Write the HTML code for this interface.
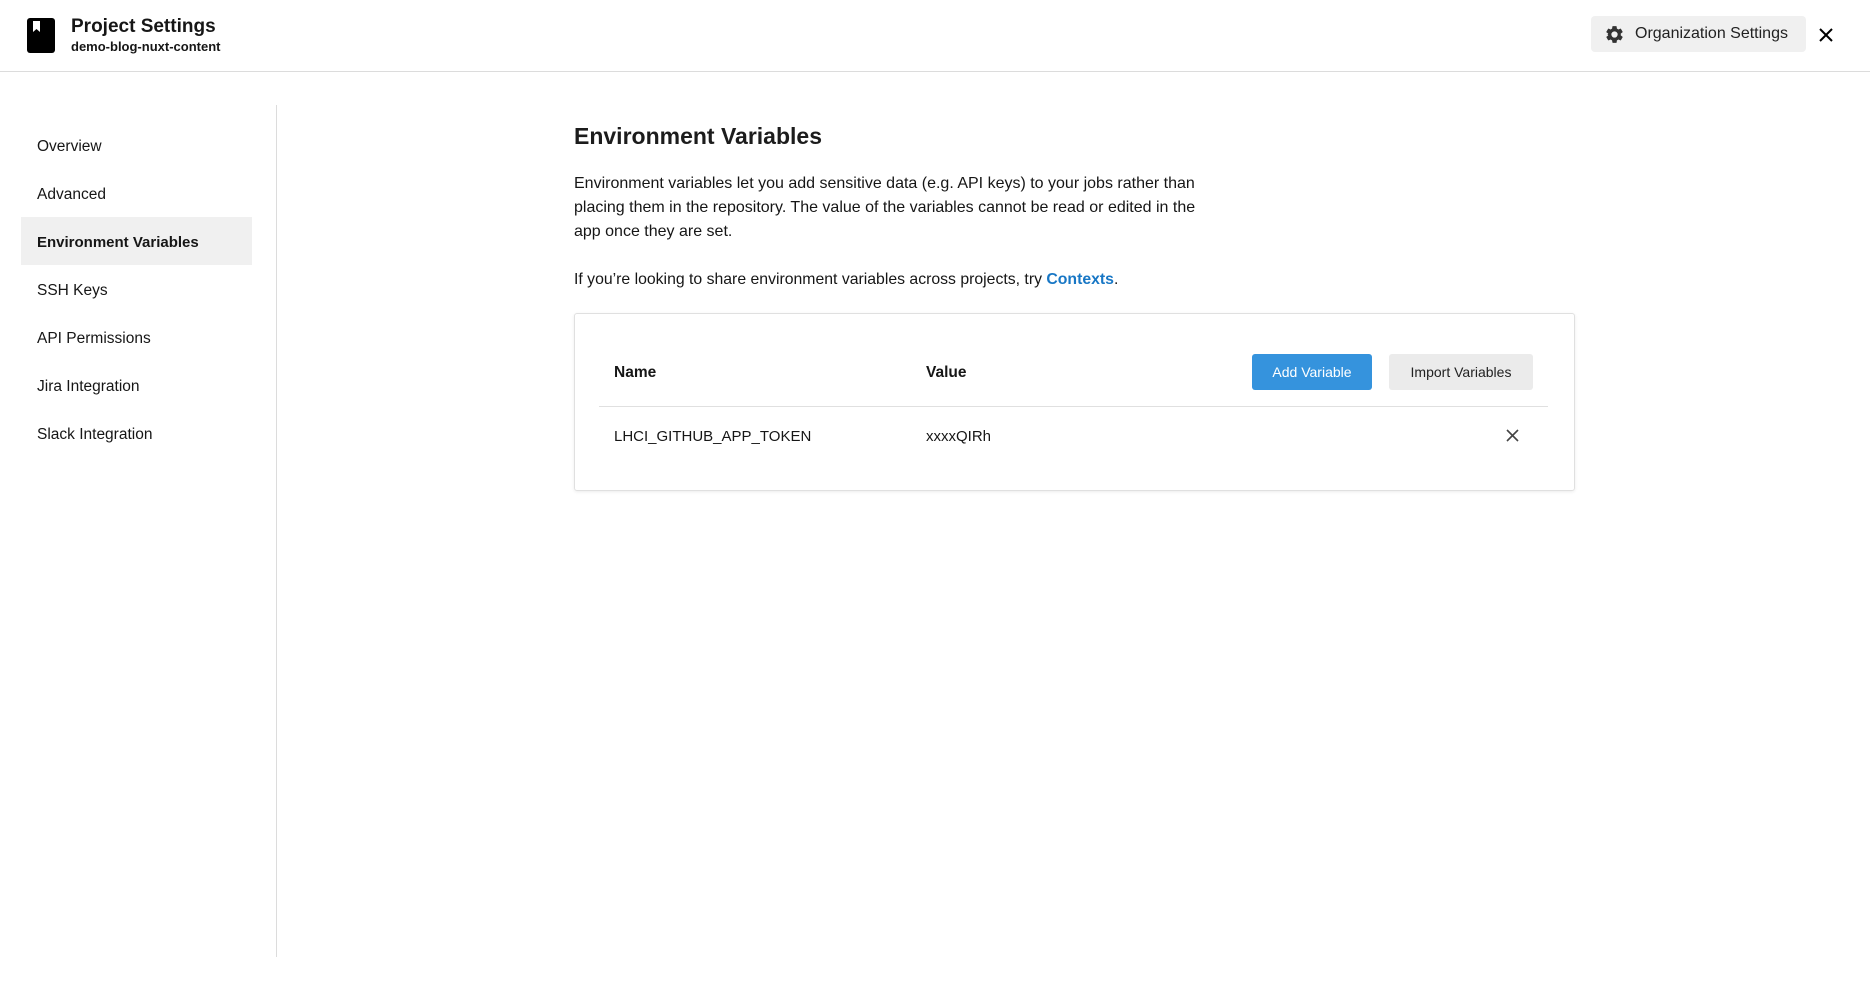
<!DOCTYPE html>
<html><head><meta charset="utf-8"><style>
*{box-sizing:border-box;margin:0;padding:0}
body{width:1870px;height:981px;background:#fff;font-family:"Liberation Sans",sans-serif;color:#161616;position:relative;overflow:hidden}
.hdr{position:absolute;left:0;top:0;width:1870px;height:72px;border-bottom:1px solid #dcdcdc}
.abs{position:absolute}
.side a{position:absolute;left:37px;font-size:15.5px;color:#161616;text-decoration:none;line-height:20px}
</style></head><body>
<div class="hdr">
  <svg class="abs" style="left:27px;top:18px" width="28" height="35" viewBox="0 0 28 35"><rect x="0" y="0" width="28" height="35" rx="3" fill="#000"/><path d="M6 3 h7 v11 l-3.5 -3 l-3.5 3z" fill="#fff"/></svg>
  <div class="abs" style="left:71px;top:15px;font-size:19px;font-weight:bold;line-height:24px">Project Settings</div>
  <div class="abs" style="left:71px;top:39px;font-size:13px;font-weight:bold;line-height:16px">demo-blog-nuxt-content</div>
  <div class="abs" style="left:1591px;top:16px;width:215px;height:36px;background:#f0f0f0;border-radius:4px"></div>
  <svg class="abs" style="left:1604px;top:24px" width="21" height="21" viewBox="0 0 24 24"><path fill="#333" d="M19.14 12.94c.04-.3.06-.61.06-.94 0-.32-.02-.64-.07-.94l2.03-1.58a.49.49 0 0 0 .12-.61l-1.920-3.32a.49.49 0 0 0-.59-.22l-2.39.96c-.5-.38-1.030-.7-1.62-.94l-.36-2.54a.48.48 0 0 0-.48-.41h-3.84c-.24 0-.43.17-.47.41l-.36 2.54c-.59.24-1.13.57-1.62.94l-2.39-.96a.48.48 0 0 0-.59.22L2.74 8.87c-.12.21-.8.47.12.61l2.03 1.58c-.5.3-.7.63-.7.94s.2.64.7.94l-2.03 1.58a.49.49 0 0 0-.12.61l1.92 3.32c.12.22.37.29.59.22l2.39-.96c.5.38 1.03.7 1.62.94l.36 2.54c.5.24.24.41.48.41h3.84c.24 0 .44-.17.47-.41l.36-2.54c.59-.24 1.13-.56 1.62-.94l2.39.96c.22.08.47 0 .59-.22l1.92-3.32c.12-.22.07-.47-.12-.61l-2.01-1.58zM12 15.6A3.6 3.6 0 1 1 12 8.4a3.6 3.6 0 0 1 0 7.2z"/></svg>
  <div class="abs" style="left:1635px;top:24px;font-size:16px;line-height:20px;color:#222">Organization Settings</div>
  <svg class="abs" style="left:1819px;top:28px" width="14" height="14" viewBox="0 0 14 14"><path d="M1 1L13 13M13 1L1 13" stroke="#000" stroke-width="2"/></svg>
</div>
<div class="side">
  <div class="abs" style="left:21px;top:217px;width:231px;height:48px;background:#f0f0f0"></div>
  <div class="abs" style="left:276px;top:105px;width:1px;height:852px;background:#dcdcdc"></div>
  <a style="top:137px">Overview</a>
  <a style="top:185px">Advanced</a>
  <a style="top:233px;font-weight:bold;font-size:15px">Environment Variables</a>
  <a style="top:281px">SSH Keys</a>
  <a style="top:329px">API Permissions</a>
  <a style="top:377px">Jira Integration</a>
  <a style="top:425px">Slack Integration</a>
</div>
<div class="abs" style="left:574px;top:121px;font-size:23px;font-weight:bold;line-height:30px;color:#1c1c1c">Environment Variables</div>
<div class="abs" style="left:574px;top:172px;width:630px;font-size:16px;line-height:24px">Environment variables let you add sensitive data (e.g. API keys) to your jobs rather than placing them in the repository. The value of the variables cannot be read or edited in the app once they are set.</div>
<div class="abs" style="left:574px;top:268px;font-size:15.8px;line-height:24px">If you’re looking to share environment variables across projects, try <b style="color:#1877c5">Contexts</b>.</div>
<div class="abs" style="left:574px;top:313px;width:1001px;height:178px;border:1px solid #e0e0e0;border-radius:3px;box-shadow:0 1px 3px rgba(0,0,0,.08)"></div>
<div class="abs" style="left:614px;top:363px;font-size:15.5px;font-weight:bold;line-height:20px">Name</div>
<div class="abs" style="left:926px;top:363px;font-size:15.5px;font-weight:bold;line-height:20px">Value</div>
<div class="abs" style="left:1252px;top:354px;width:120px;height:36px;background:#3593dd;border-radius:3px;color:#fff;font-size:14px;line-height:36px;text-align:center">Add Variable</div>
<div class="abs" style="left:1389px;top:354px;width:144px;height:36px;background:#ebebeb;border-radius:3px;color:#222;font-size:14px;line-height:36px;text-align:center">Import Variables</div>
<div class="abs" style="left:599px;top:406px;width:949px;height:1px;background:#e0e0e0"></div>
<div class="abs" style="left:614px;top:427px;font-size:15px;line-height:20px">LHCI_GITHUB_APP_TOKEN</div>
<div class="abs" style="left:926px;top:427px;font-size:15px;line-height:20px">xxxxQIRh</div>
<svg class="abs" style="left:1506px;top:429px" width="13" height="13" viewBox="0 0 13 13"><path d="M1 1L12 12M12 1L1 12" stroke="#444" stroke-width="1.6"/></svg>
</body></html>
